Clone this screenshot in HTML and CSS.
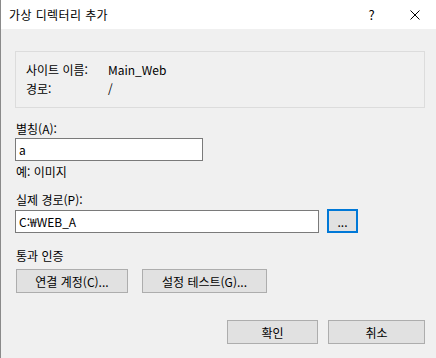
FILE: index.html
```html
<!DOCTYPE html>
<html lang="ko">
  <head>
    <meta charset="UTF-8" />
    <title>가상 디렉터리 추가</title>
    <link rel="stylesheet" href="styles.css">
  </head>
  <body>
    <div class="window">
      <div class="titlebar">
        <span class="title">가상 디렉터리 추가</span>
        <span class="caption-btn help">?</span>
        <span class="caption-btn close">
          <svg width="10" height="10" viewBox="0 0 10 10">
            <path d="M0.5 0.5 L9.5 9.5 M9.5 0.5 L0.5 9.5" stroke="#000" stroke-width="1" fill="none" />
          </svg>
        </span>
      </div>

      <div class="content">
        <div class="info-box">
          <div class="info-row"><span class="info-key">사이트 이름:</span><span>Main_Web</span></div>
          <div class="info-row"><span class="info-key">경로:</span><span>/</span></div>
        </div>

        <div class="label first">별칭(A):</div>
        <div class="textbox alias">a</div>
        <div class="label hint">예: 이미지</div>

        <div class="label path-label">실제 경로(P):</div>
        <div class="path-row">
          <div class="textbox path">C:₩WEB_A</div>
          <div class="btn browse">...</div>
        </div>

        <div class="label auth-label">통과 인증</div>
        <div class="auth-row">
          <div class="btn connect">연결 계정(C)...</div>
          <div class="btn test">설정 테스트(G)...</div>
        </div>

        <div class="footer">
          <div class="btn ok">확인</div>
          <div class="btn cancel">취소</div>
        </div>
      </div>
    </div>
  </body>
</html>
```

FILE: styles.css
```css
html, body {
  margin: 0;
  padding: 0;
}
body {
  font-family: "Noto Sans CJK KR", "Noto Sans", sans-serif;
  font-size: 12px;
  color: #000;
  background-color: #f0f0f0;
}
.window {
  width: 435px;
  height: 358px;
  border-left: 1px solid #8a8a8a;
  background-color: #f0f0f0;
  overflow: hidden;
}
.titlebar {
  height: 29px;
  background-color: #fff;
  display: flex;
  align-items: center;
}
.title {
  flex: 1;
  padding-left: 8px;
  line-height: 29px;
  letter-spacing: 0.4px;
}
.caption-btn {
  height: 29px;
  display: flex;
  align-items: center;
  justify-content: center;
}
.help {
  width: 45px;
  font-size: 13px;
}
.close {
  width: 42px;
  padding-top: 1px;
}
.content {
  padding: 22px 11px 0 14px;
}
.info-box {
  border: 1px solid #dcdcdc;
  padding: 8px 0 9px 10px;
  height: 38px;
}
.info-row {
  display: flex;
  line-height: 19px;
}
.info-key {
  width: 82px;
}
.label {
  line-height: 16px;
  padding-left: 1px;
}
.label.first {
  margin-top: 13px;
}
.label.hint {
  margin-top: 3px;
}
.label.path-label {
  margin-top: 12px;
}
.label.auth-label {
  margin-top: 15px;
}
.textbox {
  box-sizing: border-box;
  height: 23px;
  border: 1px solid #7a7a7a;
  background-color: #fff;
  line-height: 21px;
  padding-left: 3px;
  margin-top: 1px;
}
.textbox.alias {
  width: 188px;
}
.path-row {
  display: flex;
  align-items: flex-end;
  gap: 8px;
  margin-top: 1px;
}
.textbox.path {
  width: 304px;
  margin-top: 0;
}
.btn {
  box-sizing: border-box;
  height: 24px;
  border: 1px solid #adadad;
  background-color: #e1e1e1;
  display: flex;
  align-items: center;
  justify-content: center;
}
.btn.browse {
  width: 31px;
  border: 2px solid #0078d7;
}
.auth-row {
  display: flex;
  gap: 14px;
  margin-top: 5px;
  padding-left: 1px;
}
.btn.connect {
  width: 112px;
}
.btn.test {
  width: 125px;
}
.footer {
  display: flex;
  justify-content: flex-end;
  gap: 10px;
  margin-top: 27px;
}
.btn.ok {
  width: 91px;
}
.btn.cancel {
  width: 97px;
}
```
